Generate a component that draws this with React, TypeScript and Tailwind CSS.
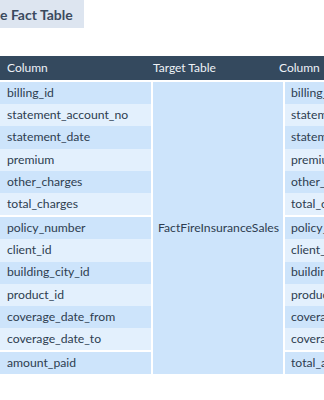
const groups = [
  ['billing_id', 'statement_account_no', 'statement_date', 'premium', 'other_charges', 'total_charges'],
  ['policy_number', 'client_id', 'building_city_id', 'product_id', 'coverage_date_from', 'coverage_date_to'],
  ['amount_paid'],
];

const targetGroups = [
  ['billing_id', 'statement_account_no', 'statement_date', 'premium', 'other_charges', 'total_charges'],
  ['policy_number', 'client_id', 'building_city_id', 'product_id', 'coverage_date_from', 'coverage_date_to'],
  ['total_amount'],
];

function ColumnCells({ data, pad }: { data: string[][]; pad: string }) {
  return (
    <div className="flex flex-col gap-[2px]">
      {data.map((g, gi) => (
        <div key={gi} className="flex flex-col">
          {g.map((c, i) => (
            <div
              key={c}
              className={`h-[22.2px] flex items-center whitespace-nowrap ${pad} ${
                i % 2 === 0 ? 'bg-[#cde4fb]' : 'bg-[#e3f0fd]'
              }`}
            >
              {c}
            </div>
          ))}
        </div>
      ))}
    </div>
  );
}

export default function App() {
  return (
    <div className="w-[324px] h-[400px] bg-white overflow-hidden font-['Lato',sans-serif] text-[12.2px] text-[#2d3d50]">
      <div className="inline-flex items-center h-[28px] pr-[11px] bg-[#dde5f0] text-[14px] font-bold text-[#3b4a5e]">
        e Fact Table
      </div>

      <div className="mt-[28px] h-[24px] flex items-center bg-[#34495e] text-[12px] text-[#eef2f7] whitespace-nowrap">
        <div className="w-[153px] pl-[7px]">Column</div>
        <div className="w-[126px]">Target Table</div>
        <div>Column</div>
      </div>

      <div className="mt-[2px] flex gap-[2px]">
        <div className="w-[151px] shrink-0">
          <ColumnCells data={groups} pad="pl-[7px]" />
        </div>
        <div className="w-[130px] shrink-0 bg-[#cde4fb] flex items-center pl-[5px] whitespace-nowrap">
          FactFireInsuranceSales
        </div>
        <div className="w-[120px] shrink-0 overflow-hidden">
          <ColumnCells data={targetGroups} pad="pl-[6px]" />
        </div>
      </div>
    </div>
  );
}
